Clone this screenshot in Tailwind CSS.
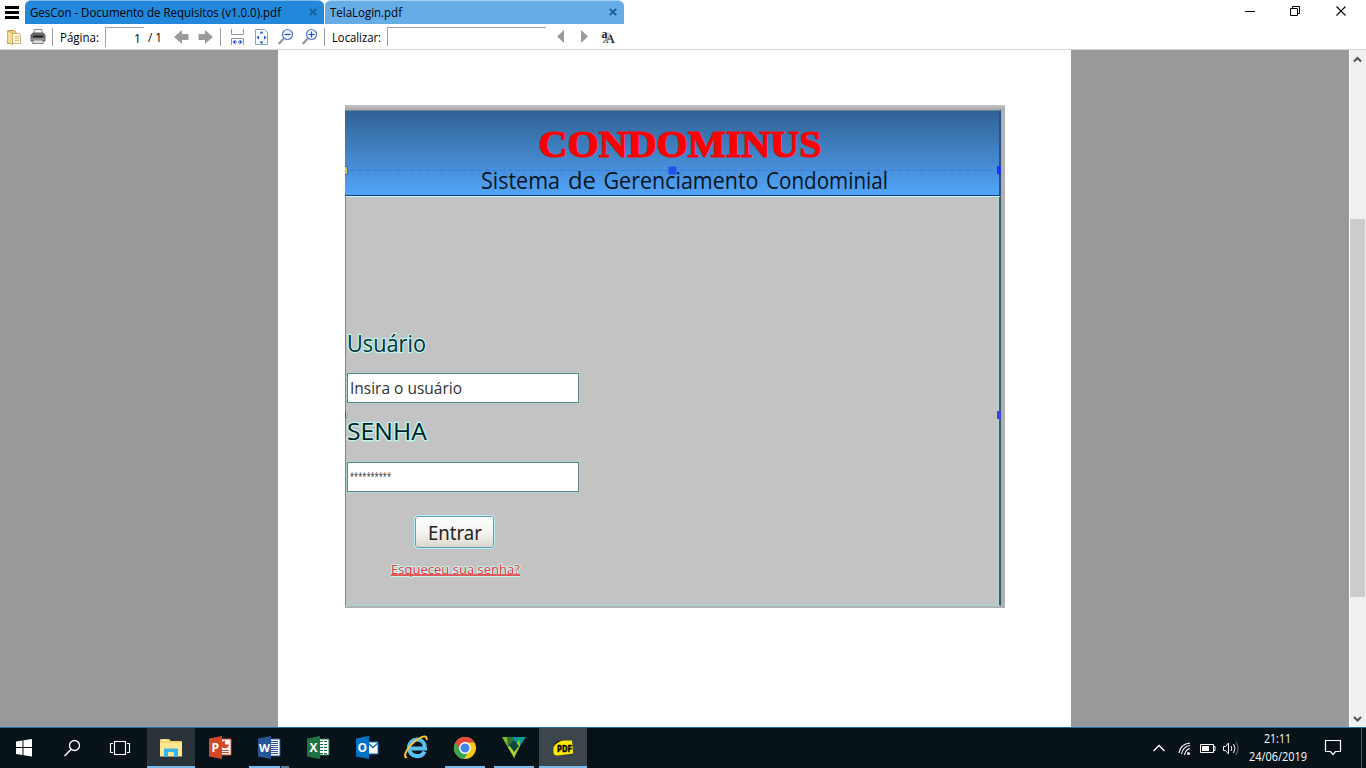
<!DOCTYPE html>
<html lang="pt-BR">
<head>
<meta charset="utf-8">
<title>TelaLogin.pdf</title>
<script src="https://cdn.jsdelivr.net/npm/@tailwindcss/browser@4"></script>
</head>
<body class="w-[1366px] h-[768px] overflow-hidden bg-white text-black font-['Open_Sans','Noto_Sans',sans-serif] text-[12px] flex flex-col">

<!-- Title bar with tabs -->
<header class="h-[25px] flex shrink-0">
  <div class="w-[25px] pl-[5px] pt-[6px] flex flex-col gap-[2px]">
    <i class="block w-[14px] h-[3px] bg-black"></i><i class="block w-[14px] h-[3px] bg-black"></i><i class="block w-[14px] h-[3px] bg-black"></i>
  </div>
  <div class="w-[299px] h-[24px] mr-px bg-[#2288dc] border-t border-[#7db9ea] rounded-t-[6px] flex justify-between pl-[5px] pr-[7px]">
    <svg class="w-[260px] h-[23px]" viewBox="0 0 260 23"><text x="0" y="16" font-size="12" textLength="251" lengthAdjust="spacingAndGlyphs">GesCon - Documento de Requisitos (v1.0.0).pdf</text></svg>
    <svg class="w-[8px] h-[8px] mt-[7px]" viewBox="0 0 8 8"><path d="M.8.8l6.4 6.4M7.2.8L.8 7.2" stroke="#185b92" stroke-width="1.8"/></svg>
  </div>
  <div class="w-[299px] h-[24px] bg-[#66ade8] border-t border-[#abd2f3] rounded-t-[6px] flex justify-between pl-[5px] pr-[7px]">
    <svg class="w-[80px] h-[23px]" viewBox="0 0 80 23"><text x="0" y="16" font-size="12" textLength="72" lengthAdjust="spacingAndGlyphs">TelaLogin.pdf</text></svg>
    <svg class="w-[8px] h-[8px] mt-[7px]" viewBox="0 0 8 8"><path d="M.8.8l6.4 6.4M7.2.8L.8 7.2" stroke="#185b92" stroke-width="1.8"/></svg>
  </div>
  <svg class="w-[122px] h-[25px] ml-auto" viewBox="1244 0 122 25" fill="none" stroke="#000">
    <path d="M1245 11.500h10"/>
    <path d="M1290.500 8.500h7v7h-7zM1292.500 8.500v-2h7v7h-2"/>
    <path d="M1336.500 6.500l9 9M1345.500 6.500l-9 9" stroke-width="1.100"/>
  </svg>
</header>

<!-- Toolbar -->
<nav class="h-[25px] flex shrink-0 border-b border-[#d6d6d6]">
  <svg class="w-[57px] h-[24px]" viewBox="0 0 57 24">
    <path d="M7.500 5.500h7l1.500 2v11h-8.500z" fill="#f3cc78" stroke="#c49a50"/>
    <path d="M12.500 8.500h7l1 1v9h-8z" fill="#fff8df" stroke="#c9b582"/><path d="M15 11.500h4M15 13.500h4M15 15.500h4" stroke="#d8bf8a"/>
    <path d="M7.500 5.500l5 3v11l-5-2z" fill="#f8dd98" stroke="#d4ad60"/>
    <path d="M34 4.500h8v6h-8z" fill="#f8f8f8" stroke="#888"/><path d="M31 10l2-2h10l2 2v6H31z" fill="#6d6d6d" stroke="#5c5c5c"/><path d="M33 11.500h10" stroke="#222" stroke-width="2"/><path d="M33.500 15h9l1 3.500h-11z" fill="#d7dce4" stroke="#8a8a8a"/><path d="M31 14h14" stroke="#aaa"/>
    <path d="M52.500 3v18" stroke="#a0a0a0"/>
  </svg>
  <svg class="w-[48px] h-[24px]" viewBox="0 0 48 24"><text x="3" y="17" font-size="12" textLength="39" lengthAdjust="spacingAndGlyphs">Página:</text></svg>
  <div class="w-[39px] mt-[2px] h-[20px] border-t border-l border-[#a0a0a0]"><svg class="w-[38px] h-[20px]" viewBox="0 0 38 20"><text x="28" y="15" font-size="12">1</text></svg></div>
  <svg class="w-[20px] h-[24px]" viewBox="0 0 20 24"><text x="4" y="17" font-size="12" textLength="14" lengthAdjust="spacingAndGlyphs">/ 1</text></svg>
  <svg class="w-[163px] h-[24px]" viewBox="164 25 163 24" fill="none">
    <path d="M174 37l8-7v4h6.500v6H182v4z" fill="#9b9b9b"/>
    <path d="M213 37l-8-7v4h-6.500v6h6.500v4z" fill="#9b9b9b"/>
    <path d="M220.500 28v18" stroke="#a0a0a0"/>
    <path d="M231.500 29v5.500h12V29M231.500 45v-6.500h12V45" fill="#fcfdff" stroke="#8d98aa"/>
    <path d="M232.500 42l3-2.500v5zM242.500 42l-3-2.500v5z" fill="#2457d6"/><path d="M236 42h3" stroke="#2457d6" stroke-dasharray="1"/>
    <path d="M255.500 29.500h9l3 3v12h-12z" fill="#f8fbff" stroke="#8ba1c5"/>
    <path d="M261.500 31l2 2.500h-4zM261.500 44l2-2.500h-4zM256.500 37.500l2.500-2v4zM266.500 37.500l-2.500-2v4z" fill="#2457d6"/>
    <path d="M283.700 38.500l-5 5.500" stroke="#9a9a9a" stroke-width="2.500"/><circle cx="287.500" cy="34.500" r="5" fill="#f2f6ff" stroke="#5a78d4" stroke-width="1.200"/><path d="M284.500 34.500h6" stroke="#1d49c9" stroke-width="1.200"/>
    <path d="M307.700 38.500l-5 5.500" stroke="#9a9a9a" stroke-width="2.500"/><circle cx="311.500" cy="34.500" r="5" fill="#f2f6ff" stroke="#5a78d4" stroke-width="1.200"/><path d="M308.500 34.500h6M311.500 31.500v6" stroke="#1d49c9" stroke-width="1.200"/>
    <path d="M324.500 28v18" stroke="#a0a0a0"/>
  </svg>
  <svg class="w-[60px] h-[24px]" viewBox="327 25 60 24"><text x="332" y="42" font-size="12" textLength="49" lengthAdjust="spacingAndGlyphs">Localizar:</text></svg>
  <div class="w-[159px] mt-[2px] h-[19px] border-t border-l border-[#a0a0a0]"></div>
  <svg class="w-[80px] h-[24px]" viewBox="546 25 80 24">
    <path d="M557 36.500l7-6.500v13zM588 36.500l-7-6.500v13z" fill="#9b9b9b"/>
    <path d="M608 38l-5 5" stroke="#999" stroke-width="2"/><circle cx="608" cy="36" r="3" fill="#dde6f1" stroke="#a9b5c5"/>
    <text x="601.500" y="38" font-size="12" font-weight="bold" font-family="Liberation Serif" fill="#222">a</text><text x="606" y="43" font-size="12" font-weight="bold" font-family="Liberation Serif" fill="#333">A</text>
  </svg>
</nav>

<!-- Document viewer -->
<main class="h-[677px] flex shrink-0 bg-[#999]">
  <div class="w-[1349px] flex pl-[278px]">
    <section class="w-[793px] bg-white pl-[67px] pt-[55px]">
      <div class="relative w-[660px] h-[503px] bg-[#b1b1b1] flex flex-col">
        <div class="h-[5px] bg-linear-to-b from-[#c4c4c4] to-[#a8a8a8]"></div>
        <div class="w-[656px] h-[86px] bg-linear-to-b from-[#316295] to-[#52a5fa] border-t border-t-[#6f8797] border-b border-b-[#123f7c] border-r-2 border-r-[#24508c]">
          <svg class="w-[654px] h-[84px]" viewBox="345 111 654 84">
            <path d="M350 170.500h645" stroke="#3a78dc" stroke-dasharray="5 2.500"/>
            <path d="M668.500 166.500h8v8h-8z" fill="#2450f0"/>
            <text x="538.500" y="157" font-family="Liberation Serif" font-weight="bold" font-size="38" fill="red" stroke="red" stroke-width="1.200" textLength="283" lengthAdjust="spacingAndGlyphs">CONDOMINUS</text>
            <g font-size="23" fill="#071521">
              <text x="481" y="188.500" textLength="79" lengthAdjust="spacingAndGlyphs">Sistema</text>
              <text x="568" y="188.500" textLength="28" lengthAdjust="spacingAndGlyphs">de</text>
              <text x="603.500" y="188.500" textLength="155" lengthAdjust="spacingAndGlyphs">Gerenciamento</text>
              <text x="766" y="188.500" textLength="122" lengthAdjust="spacingAndGlyphs">Condominial</text>
            </g>
            <path d="M345 167h2v7h-2z" fill="#c9c760"/><path d="M345 166.500h2.500v8H345" fill="none" stroke="#3268d5"/>
          </svg>
        </div>
        <div class="w-[656px] h-[410px] bg-[#c3c3c3] border-t border-t-[#c4fbf8] border-l border-l-[#6b8c92] border-r-2 border-r-[#4b5360] border-b border-b-[#a0dcdc]">
          <div class="w-[653px] h-[408px] border-r border-[#9ce3e1] flex flex-col">
            <svg class="w-[240px] h-[40px] mt-[128px] shrink-0" viewBox="346 325 240 40"><text x="347" y="352" font-size="23" fill="#0d3035" stroke="#baf5f1" stroke-width="2.500" paint-order="stroke" textLength="79" lengthAdjust="spacingAndGlyphs">Usuário</text></svg>
            <div class="w-[232px] h-[30px] ml-px mt-[8px] shrink-0 bg-white border border-[#5c8588] outline outline-[#a4dedd]/50"><svg class="w-[230px] h-[28px]" viewBox="348 374 230 28"><text x="350" y="394" font-size="15.500" fill="#333" textLength="112" lengthAdjust="spacingAndGlyphs">Insira o usuário</text></svg></div>
            <svg class="w-[240px] h-[40px] mt-[10px] shrink-0" viewBox="346 413 240 40"><text x="347" y="439.500" font-size="23" fill="#051e22" stroke="#baf5f1" stroke-width="2.500" paint-order="stroke" textLength="80" lengthAdjust="spacingAndGlyphs">SENHA</text></svg>
            <div class="w-[232px] h-[30px] ml-px mt-[9px] shrink-0 bg-white border border-[#5c8588] outline outline-[#a4dedd]/60"><svg class="w-[230px] h-[28px]" viewBox="348 462 230 28"><text x="350" y="479" font-size="11" fill="#333" textLength="41" lengthAdjust="spacingAndGlyphs">**********</text></svg></div>
            <div class="w-[79px] h-[32px] ml-[69px] mt-[24px] shrink-0 rounded-[3px] border border-[#5f9cba] outline outline-[#bdf2f5] bg-linear-to-b from-white via-[#f4f4f1] to-[#dcd8cf]"><svg class="w-[77px] h-[30px]" viewBox="416 517 77 30"><text x="428" y="540" font-size="20" fill="#222" font-family="Noto Sans" textLength="54" lengthAdjust="spacingAndGlyphs">Entrar</text></svg></div>
            <svg class="w-[140px] h-[24px] ml-[40px] mt-[10px] shrink-0" viewBox="386 558 140 24"><path d="M391 576.500h129" stroke="#c5f4f1"/><text x="391" y="573.500" font-size="13.500" fill="#ee3038" stroke="#c5f4f1" stroke-width="2" paint-order="stroke" textLength="129" lengthAdjust="spacingAndGlyphs">Esqueceu sua senha?</text><path d="M391 575h129" stroke="#ee3038" stroke-width="1.300"/></svg>
          </div>
        </div>
        <i class="absolute left-[652px] top-[61px] w-[4px] h-[8px] bg-[#1934ec]"></i>
        <i class="absolute left-[652px] top-[306px] w-[4px] h-[8px] bg-[#3547df]"></i>
        <i class="absolute left-0 top-[306px] w-[3px] h-[8px] border border-l-[#3547df] border-[#8bb4ff]"></i>
      </div>
    </section>
  </div>
  <div class="w-[17px] bg-[#f0f0f0] border-l border-white flex flex-col">
    <svg class="w-[16px] h-[17px]" viewBox="0 0 16 17"><path d="M4 11.500l3.500-3.500 3.500 3.500" fill="none" stroke="#505050" stroke-width="2"/></svg>
    <div class="h-[378px] w-[15px] mt-[152px] bg-[#cdcdcd]"></div>
    <svg class="w-[16px] h-[17px] mt-auto" viewBox="0 0 16 17"><path d="M4 7l3.500 3.500L11 7" fill="none" stroke="#505050" stroke-width="2"/></svg>
  </div>
</main>

<!-- Taskbar -->
<footer class="h-[41px] shrink-0 bg-[#081319] border-t border-[#2070b0] flex text-white">
  <svg class="w-[147px] h-[40px]" viewBox="0 728 147 40" fill="none" stroke="#fff">
    <path d="M16 741.500l6.500-1v6.500H16zM23.500 740.300L32 739.100v7.900h-8.500zM16 748h6.500v7l-6.500-1zM23.500 748H32v8.400l-8.500-1.200z" fill="#fff" stroke="none"/>
    <circle cx="74.500" cy="745.500" r="5" stroke-width="1.300"/><path d="M71 749.500l-6.500 6.500" stroke-width="1.500"/>
    <path d="M114.500 741.500h11v13h-11zM113 743.500h-2.500v9h2.500M127 743.500h2.500v9h-2.500" stroke-width="1.100"/>
  </svg>
  <div class="flex gap-px">
    <div class="w-[48px] h-[40px] bg-[#293338] border-b-2 border-[#76b9ed]"><svg class="w-[48px] h-[38px]" viewBox="147 728 48 38"><path d="M160 740q0-1 1-1h8l2 2h10q1 0 1 1v14h-22z" fill="#f7d66d"/><path d="M160 743h22v13.500h-22z" fill="#ffe795"/><path d="M162 740.500h4" stroke="#fff"/><path d="M164 757v-7.500q0-1 1-1h12q1 0 1 1v7.500h-4v-4q0-1-1-1h-4q-1 0-1 1v4z" fill="#35b4e9"/></svg></div>
    <div class="w-[48px] h-[40px]"><svg class="w-[48px] h-[38px]" viewBox="0 0 48 38"><path d="M22 11h13v16H22z" fill="#fff" stroke="#d24726"/><circle cx="29" cy="16.500" r="3.800" fill="#d24726"/><path d="M29 16.500V12.500a4 4 0 0 1 4 4z" fill="#fff"/><path d="M24 22.500h9M24 24.500h9" stroke="#d24726"/><path d="M13 10.500l13-2.500v23l-13-2.500z" fill="#d24726"/><text x="15.500" y="24" font-size="12" font-weight="bold" fill="#fff">P</text></svg></div>
    <div class="w-[48px] h-[40px] flex flex-col items-center"><svg class="w-[48px] h-[38px] shrink-0" viewBox="0 0 48 38"><path d="M22 11h13v17H22z" fill="#fff" stroke="#2a5699"/><path d="M24 13.500h9M24 15.500h9M24 17.500h9M24 19.500h9M24 21.500h9M24 23.500h9M24 25.500h9" stroke="#2a5699"/><path d="M13 10.500l13-2.500v23l-13-2.500z" fill="#2a5699"/><text x="14" y="23.500" font-size="11" font-weight="bold" fill="#fff" textLength="11" lengthAdjust="spacingAndGlyphs">W</text></svg><div class="flex w-[40px] h-[2px] shrink-0"><i class="w-[31px] bg-[#76b9ed]"></i><i class="w-px"></i><i class="w-[8px] bg-[#55819f]"></i></div></div>
    <div class="w-[48px] h-[40px]"><svg class="w-[48px] h-[38px]" viewBox="0 0 48 38"><path d="M22 11h13v16H22z" fill="#fff" stroke="#207245"/><path d="M25 13.500h8M25 16.500h8M25 19.500h8M25 22.500h8M25 25.500h8" stroke="#207245"/><path d="M29.500 12v15" stroke="#fff"/><path d="M13 10.500l13-2.500v23l-13-2.500z" fill="#207245"/><text x="15.500" y="23.500" font-size="12" font-weight="bold" fill="#fff">X</text></svg></div>
    <div class="w-[48px] h-[40px]"><svg class="w-[48px] h-[38px]" viewBox="0 0 48 38"><path d="M24 14h11v12H24z" fill="#fff" stroke="#0072c6"/><path d="M25 15l5 4.500 5-4.500" fill="none" stroke="#0072c6" stroke-width="1.500"/><path d="M13 10.500l13-2.500v23l-13-2.500z" fill="#0072c6"/><text x="14.500" y="23.500" font-size="12" font-weight="bold" fill="#fff">O</text></svg></div>
    <div class="w-[48px] h-[40px]"><svg class="w-[48px] h-[38px]" viewBox="0 0 48 38"><path d="M32.500 23.500c-1.500 3.500-5 5-8.500 4.500-4.500-.6-7-4-7-8.500s3.500-8 8-8 8 3.500 8 9H18" fill="none" stroke="#57c1f1" stroke-width="4"/><path d="M15 29c-4 2-2-7 6-14s15-9 13.500-3" fill="none" stroke="#f5c83c" stroke-width="2"/></svg></div>
    <div class="w-[48px] h-[40px] flex flex-col items-center"><svg class="w-[48px] h-[38px] shrink-0" viewBox="0 0 48 38"><circle cx="24" cy="20" r="11" fill="#fbc916"/><path d="M14.500 14.500A11 11 0 0 1 33.500 14.500H24a5.500 5.500 0 0 0-5 7.500z" fill="#e7483b"/><path d="M14.500 14.500A11 11 0 0 0 23 31l5-8a5.500 5.500 0 0 1-9-1z" fill="#36a554"/><circle cx="24" cy="20" r="5.200" fill="#4384ef" stroke="#fff" stroke-width="1.400"/></svg><i class="block w-[40px] h-[2px] shrink-0 bg-[#76b9ed]"></i></div>
    <div class="w-[48px] h-[40px] flex flex-col items-center"><svg class="w-[48px] h-[38px] shrink-0" viewBox="0 0 48 38"><path d="M12 9h6l6 9v12z" fill="#80bd32"/><path d="M18 19l6-3 1 14z" fill="#b5d72d"/><path d="M17 9h19l-6 9z" fill="#06999a"/><path d="M17 9h6l-1 7-4 3z" fill="#35702c"/><path d="M29 11l1 7-6 12 0-6z" fill="#a9cf2d"/><path d="M19 17l5-5 5 6-5 6z" fill="#0c4a38"/></svg><i class="block w-[40px] h-[2px] shrink-0 bg-[#76b9ed]"></i></div>
    <div class="w-[48px] h-[40px] bg-[#3d464b] border-b-2 border-[#76b9ed]"><svg class="w-[48px] h-[38px]" viewBox="0 0 48 38"><path d="M14.500 19q2-6.500 9-6.500h9.500l1 13-15 2q-4.500 0-4.500-3z" fill="#ffec00"/><path d="M14.500 19q1-7.500 10-6.500-7 1-10 6.500z" fill="#080808"/><text x="18" y="24" font-size="8.500" font-weight="bold" font-family="DejaVu Sans" fill="#080808" stroke="#080808" stroke-width=".5" textLength="15" lengthAdjust="spacingAndGlyphs">PDF</text></svg></div>
  </div>
  <svg class="w-[226px] h-[40px] ml-auto" viewBox="1140 728 226 40" fill="none" stroke="#fff">
    <path d="M1153.500 751l5.500-5.500 5.500 5.500" stroke-width="1.400"/>
    <circle cx="1188.500" cy="753.500" r="1.500" fill="#fff" stroke="none"/><path d="M1179 753q1.500-9 11-10M1181.500 754q1.500-7.500 8.500-8.500M1184.500 755q1-5.500 5.500-6.500" stroke-width="1.100"/>
    <path d="M1200.500 744.500h13v8h-13zM1214 746.500h1v4h-1"/><path d="M1202 746h7v5h-7z" fill="#fff" stroke="none"/>
    <path d="M1223.500 746.500h2l3-3.500v11l-3-3.500h-2z"/><path d="M1231 746q1.500 2 0 5M1233.500 744q3 4 0 9"/><path d="M1236 742q4 6 0 13" stroke="#667075"/>
    <g fill="#fff" stroke="none" font-size="12"><text x="1264" y="743" textLength="27" lengthAdjust="spacingAndGlyphs">21:11</text><text x="1249" y="761" textLength="58" lengthAdjust="spacingAndGlyphs">24/06/2019</text></g>
    <path d="M1325.500 740.500h15v11h-5l-2.500 3-2.500-3h-5z" stroke-width="1.200"/>
    <path d="M1361.500 728v40" stroke="#4b565b"/>
  </svg>
</footer>
</body>
</html>
